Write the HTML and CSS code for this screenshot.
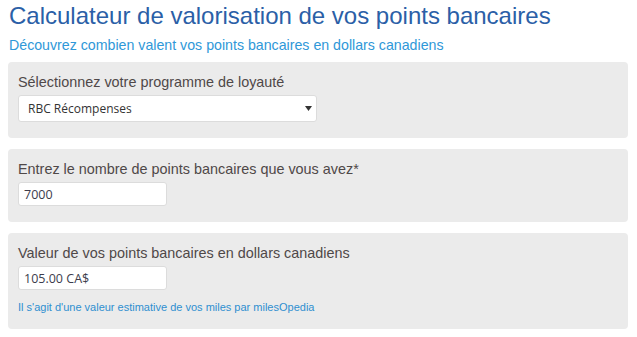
FILE: index.html
```html
<!DOCTYPE html>
<html lang="fr">
<head>
  <meta charset="UTF-8" />
  <title>Calculateur de valorisation</title>
  <link rel="stylesheet" href="styles.css">
</head>
<body>

  <div class="container">
    <h1>Calculateur de valorisation de vos points bancaires</h1>
    <p class="subtitle">Découvrez combien valent vos points bancaires en dollars canadiens</p>

    <div class="panel">
      <label for="program">Sélectionnez votre programme de loyauté</label>
      <div class="select-wrap">
        <select id="program">
          <option>RBC Récompenses</option>
          <option>Scotia Récompenses</option>
          <option>TD Voyages</option>
        </select>
        <svg class="arrow" width="7" height="5" viewBox="0 0 7 5"><path d="M0 0H7L3.5 5Z" fill="#333"/></svg>
      </div>
    </div>

    <div class="panel">
      <label for="points">Entrez le nombre de points bancaires que vous avez*</label>
      <input type="text" id="points" class="field" value="7000" />
    </div>

    <div class="panel panel-result">
      <label for="value">Valeur de vos points bancaires en dollars canadiens</label>
      <input type="text" id="value" class="field" value="105.00 CA$" readonly />
      <p class="note">Il s'agit d'une valeur estimative de vos miles par milesOpedia</p>
    </div>
  </div>

</body>
</html>
```

FILE: styles.css
```css
body {
  margin: 0;
  font-family: "Liberation Sans", Arial, sans-serif;
  background: white;
}
.container {
  padding: 0 9px 0 8px;
}
h1 {
  margin: 3px 0 0 1px;
  font-size: 24px;
  font-weight: normal;
  line-height: 26px;
  color: #2b5fa7;
}
.subtitle {
  margin: 6px 0 7px 1px;
  font-size: 14.2px;
  line-height: 20px;
  color: #2f98d8;
}
.panel {
  background: #ebebeb;
  border-radius: 4px;
  padding: 10px 10px 16px;
  margin-bottom: 11px;
}
.panel label {
  display: block;
  font-size: 14.4px;
  line-height: 20px;
  color: #4f4848;
  margin-bottom: 3px;
}
.select-wrap {
  position: relative;
  width: 299px;
}
select {
  appearance: none;
  -webkit-appearance: none;
  display: block;
  width: 100%;
  height: 27px;
  margin: 0;
  padding: 0 20px 0 9px;
  border: 1px solid #dcdcdc;
  border-radius: 3px;
  background: white;
  font-family: "Open Sans", sans-serif;
  font-size: 12px;
  color: #333;
}
.arrow {
  position: absolute;
  right: 5px;
  top: 11px;
}
.field {
  display: block;
  box-sizing: border-box;
  width: 149px;
  height: 24px;
  margin: 0;
  padding: 0 5px;
  border: 1px solid #dcdcdc;
  border-radius: 3px;
  background: white;
  font-family: "Open Sans", sans-serif;
  font-size: 12.5px;
  color: #3c3c4c;
}
.panel-result {
  padding-bottom: 14px;
}
.note {
  margin: 9px 0 0;
  font-size: 11px;
  line-height: 16px;
  color: #2f8fd0;
}
```
